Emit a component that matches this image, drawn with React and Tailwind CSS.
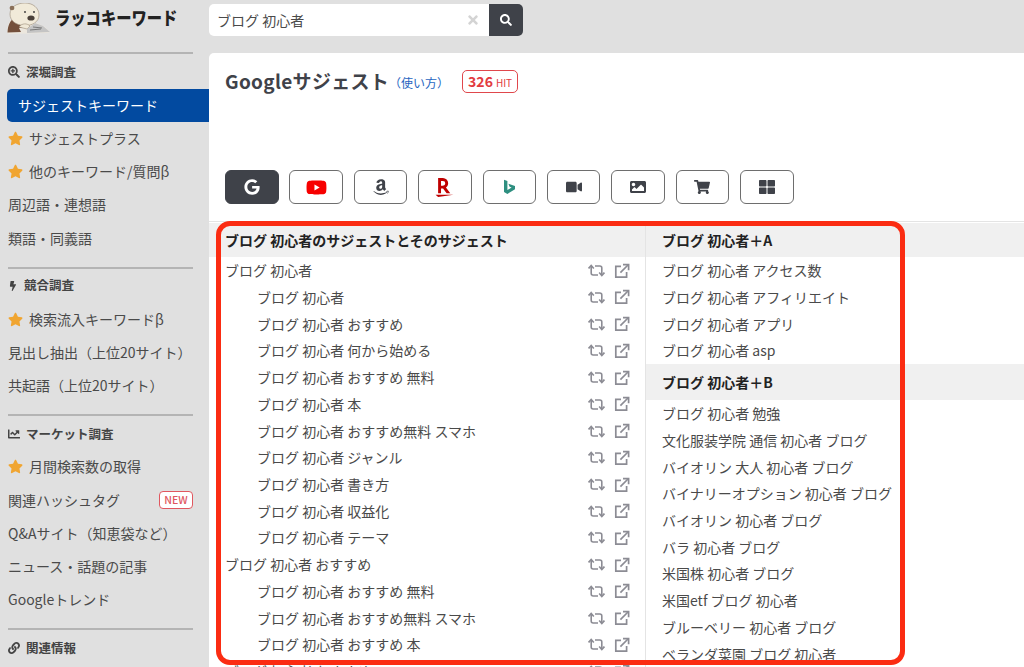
import React from "react";
import { FaSearch, FaSearchPlus, FaBolt, FaChartLine, FaLink, FaStar, FaYoutube, FaAmazon, FaVideo, FaImage, FaShoppingCart, FaThLarge, FaGoogle, FaTimes } from "react-icons/fa";
import { SiRakuten } from "react-icons/si";

const FONT = "font-['Noto_Sans_CJK_JP','Noto_Sans',sans-serif]";

function Otter() {
  return (
    <svg width="44" height="31" viewBox="0 0 44 31">
      <path d="M0 29 C1 20 3 16 8 14 L22 16 L30 20 L38 24 L43 29 L40 30 L2 31 Z" fill="#ece7de" />
      <path d="M0.5 29.5 C1 22 3 17 8 15 L24 20 L19 24 L12 25 L14 29 Z" fill="#74503c" />
      <path d="M3 11 C3 4 10 0 18 0 C26 0 32 5 32 12 C32 19 25 23 17 22.5 C9 22 3 18 3 11 Z" fill="#f1ead9" stroke="#9a8c78" strokeWidth="0.6" />
      <ellipse cx="5" cy="5" rx="2.4" ry="2.2" fill="#8a6f58" />
      <ellipse cx="24" cy="15" rx="3.6" ry="2.6" fill="#4a4039" />
      <circle cx="18" cy="9" r="0.9" fill="#333" />
      <circle cx="27" cy="9" r="0.9" fill="#333" />
      <path d="M12 24 C15 20 20 20 23 23 L20 26 Z" fill="#efe8d6" stroke="#8a7a66" strokeWidth="0.5" />
      <path d="M20 26 L28 20 L36 23 L43 29 L20 30 Z" fill="#c4c4c4" />
      <path d="M23 27 L34 26 M26 24 L35 25" stroke="#666" strokeWidth="0.8" />
    </svg>
  );
}

function RetweetIcon() {
  return (
    <svg width="17" height="13" viewBox="0 0 17 13" fill="none" stroke="#8c8c94" strokeWidth="1.6">
      <path d="M3.2 2 V9 Q3.2 11 5.2 11 H10" />
      <path d="M0.6 4.4 L3.2 1.4 L5.8 4.4" />
      <path d="M13.8 11 V4 Q13.8 2 11.8 2 H7" />
      <path d="M11.2 8.6 L13.8 11.6 L16.4 8.6" />
    </svg>
  );
}

function ExternalIcon() {
  return (
    <svg width="16" height="16" viewBox="0 0 16 16" fill="none" stroke="#8c8c94" strokeWidth="1.7">
      <path d="M12.6 9 V14.2 H1.8 V3.4 H7" />
      <path d="M6.4 9.6 L14 2" />
      <path d="M9 1.6 H14.6 V7.2" />
    </svg>
  );
}

function Divider() {
  return <div className="h-[2px] w-[185px] bg-[#b4b4b4]" />;
}

function Head({ icon, children, className }) {
  return (
    <div className={`flex h-[20px] items-center gap-[6px] text-[12.5px] font-bold text-[#444] ${className}`}>
      {icon}
      <span>{children}</span>
    </div>
  );
}

function Item({ star, badge, children }) {
  return (
    <div className="flex h-[33.2px] w-[185px] items-center text-[14px] text-[#4a4a4a]">
      {star && <FaStar className="mr-[6px] text-[15px] text-[#f0a531]" />}
      <span>{children}</span>
      {badge && (
        <span className="ml-auto flex h-[18px] w-[34px] items-center justify-center rounded-[4px] border border-[#e0575f] bg-white text-[10.5px] font-medium text-[#e0575f]">
          NEW
        </span>
      )}
    </div>
  );
}

function Sidebar() {
  return (
    <aside className="flex w-[209px] shrink-0 flex-col pl-[8px]">
      <div className="flex h-[52px] items-start">
        <div className="-ml-[1px] mt-[3px]"><Otter /></div>
        <span className="ml-[4px] mt-[4px] origin-left scale-x-[0.85] whitespace-nowrap text-[18px] font-black text-[#222]">ラッコキーワード</span>
      </div>
      <Divider />
      <Head className="mt-[8px]" icon={<FaSearchPlus className="text-[12px]" />}>深堀調査</Head>
      <div className="mt-[7px] -ml-px flex h-[33px] items-center rounded-l-[5px] bg-[#024aa0] pl-[11px] text-[14px] text-white">サジェストキーワード</div>
      <Item star>サジェストプラス</Item>
      <Item star>他のキーワード/質問β</Item>
      <Item>周辺語・連想語</Item>
      <Item>類語・同義語</Item>
      <div className="mt-[12px]"><Divider /></div>
      <Head className="mt-[7px]" icon={<FaBolt className="text-[10px]" />}>競合調査</Head>
      <div className="mt-[7px]">
        <Item star>検索流入キーワードβ</Item>
        <Item>見出し抽出（上位20サイト）</Item>
        <Item>共起語（上位20サイト）</Item>
      </div>
      <div className="mt-[12px]"><Divider /></div>
      <Head className="mt-[8px]" icon={<FaChartLine className="text-[12px]" />}>マーケット調査</Head>
      <div className="mt-[6px]">
        <Item star>月間検索数の取得</Item>
        <Item badge>関連ハッシュタグ</Item>
        <Item>Q&Aサイト（知恵袋など）</Item>
        <Item>ニュース・話題の記事</Item>
        <Item>Googleトレンド</Item>
      </div>
      <div className="mt-[12px]"><Divider /></div>
      <Head className="mt-[8px]" icon={<FaLink className="text-[12px]" />}>関連情報</Head>
    </aside>
  );
}

function IconButton({ active, children }) {
  return (
    <div className={`flex h-[34px] w-[53.5px] items-center justify-center rounded-[6px] border ${active ? "border-[#3f4249] bg-[#3f4249] text-white" : "border-[#6e6e6e] bg-white text-[#3f4249]"}`}>
      {children}
    </div>
  );
}

function BingIcon() {
  return (
    <svg width="13" height="16" viewBox="0 0 13 16">
      <path d="M1 0.8 L4.4 2 V11 L8.6 8.6 L6.6 7.7 L5.4 4.7 L12 7 V10.2 L4.4 15 L1 13 Z" fill="#2e8f80" />
    </svg>
  );
}

function Row({ indent, actions, children }) {
  return (
    <div className={`flex h-[26.72px] shrink-0 items-center text-[14px] text-[#4a4a4a] ${indent ? "pl-[48px]" : "pl-[16px]"}`}>
      <span className="whitespace-nowrap">{children}</span>
      {actions && (
        <span className="ml-auto mr-[15px] flex items-center gap-[9px]">
          <RetweetIcon />
          <ExternalIcon />
        </span>
      )}
    </div>
  );
}

function TableHead({ tall, children }) {
  return (
    <div className={`flex shrink-0 items-center bg-[#f0f0f0] pl-[16px] text-[14px] font-bold text-[#222] ${tall ? "h-[36px] pt-[1px]" : "h-[34.4px]"}`}>{children}</div>
  );
}

const left = [
  ["ブログ 初心者", 0],
  ["ブログ 初心者", 1],
  ["ブログ 初心者 おすすめ", 1],
  ["ブログ 初心者 何から始める", 1],
  ["ブログ 初心者 おすすめ 無料", 1],
  ["ブログ 初心者 本", 1],
  ["ブログ 初心者 おすすめ無料 スマホ", 1],
  ["ブログ 初心者 ジャンル", 1],
  ["ブログ 初心者 書き方", 1],
  ["ブログ 初心者 収益化", 1],
  ["ブログ 初心者 テーマ", 1],
  ["ブログ 初心者 おすすめ", 0],
  ["ブログ 初心者 おすすめ 無料", 1],
  ["ブログ 初心者 おすすめ無料 スマホ", 1],
  ["ブログ 初心者 おすすめ 本", 1],
  ["ブログ 初心者 おすすめ", 0],
];
const rightA = ["ブログ 初心者 アクセス数", "ブログ 初心者 アフィリエイト", "ブログ 初心者 アプリ", "ブログ 初心者 asp"];
const rightB = ["ブログ 初心者 勉強", "文化服装学院 通信 初心者 ブログ", "バイオリン 大人 初心者 ブログ", "バイナリーオプション 初心者 ブログ", "バイオリン 初心者 ブログ", "バラ 初心者 ブログ", "米国株 初心者 ブログ", "米国etf ブログ 初心者", "ブルーベリー 初心者 ブログ", "ベランダ菜園 ブログ 初心者"];

export default function App() {
  return (
    <div className={`${FONT} relative flex h-[667px] w-[1024px] overflow-hidden bg-[#e0e0e0]`}>
      <Sidebar />
      <div className="flex min-w-0 flex-1 flex-col">
        <div className="flex h-[53px] shrink-0 items-start pt-[4px]">
          <div className="flex h-[32px] w-[280px] items-center rounded-l-[5px] bg-white pl-[8px] pr-[9px] text-[14px] text-[#4a4a4a]">
            <span>ブログ 初心者</span>
            <FaTimes className="ml-auto text-[14px] text-[#d4d4d4]" />
          </div>
          <div className="flex h-[32px] w-[34px] items-center justify-center rounded-r-[5px] bg-[#3f4249] text-white">
            <FaSearch className="text-[12px]" />
          </div>
        </div>
        <main className="flex min-h-0 flex-1 flex-col rounded-tl-[5px] bg-white">
          <div className="flex h-[57px] shrink-0 items-center pl-[16px]">
            <span className="text-[19px] font-bold tracking-[0.3px] text-[#3f4249]">Googleサジェスト</span>
            <span className="mt-[3px] text-[12px] text-[#1f66c1]">（使い方）</span>
            <span className="ml-[13px] flex h-[23px] w-[56px] items-center justify-center gap-[3px] rounded-[5px] border border-[#e0474c] text-[#e23b40]">
              <span className="text-[14px] font-bold">326</span>
              <span className="mt-[1px] text-[10px]">HIT</span>
            </span>
          </div>
          <div className="mt-[60px] flex shrink-0 gap-[10.9px] pl-[16px]">
            <IconButton active><FaGoogle className="text-[16px]" /></IconButton>
            <IconButton><FaYoutube className="text-[21px] text-[#f70000]" /></IconButton>
            <IconButton><FaAmazon className="text-[18px]" /></IconButton>
            <IconButton><SiRakuten className="text-[19px] text-[#bf0000]" /></IconButton>
            <IconButton><BingIcon /></IconButton>
            <IconButton><FaVideo className="text-[16px]" /></IconButton>
            <IconButton><FaImage className="text-[16px]" /></IconButton>
            <IconButton><FaShoppingCart className="text-[16px]" /></IconButton>
            <IconButton><FaThLarge className="text-[16px]" /></IconButton>
          </div>
          <div className="mt-[17px] flex min-h-0 flex-1 border-t border-[#e4e4e4] pt-[1px]">
            <div className="flex w-[437px] shrink-0 flex-col border-r border-[#e4e4e4]">
              <TableHead>ブログ 初心者のサジェストとそのサジェスト</TableHead>
              {left.map(([t, indent], i) => (
                <Row key={i} indent={!!indent} actions>{t}</Row>
              ))}
            </div>
            <div className="flex min-w-0 flex-1 flex-col">
              <TableHead>ブログ 初心者＋A</TableHead>
              {rightA.map((t, i) => <Row key={i}>{t}</Row>)}
              <TableHead tall>ブログ 初心者＋B</TableHead>
              {rightB.map((t, i) => <Row key={i}>{t}</Row>)}
            </div>
          </div>
        </main>
      </div>
      <div className="pointer-events-none absolute left-[216px] top-[221px] h-[444px] w-[689px] rounded-[14px] border-[5px] border-[#fb2c12]" />
    </div>
  );
}
